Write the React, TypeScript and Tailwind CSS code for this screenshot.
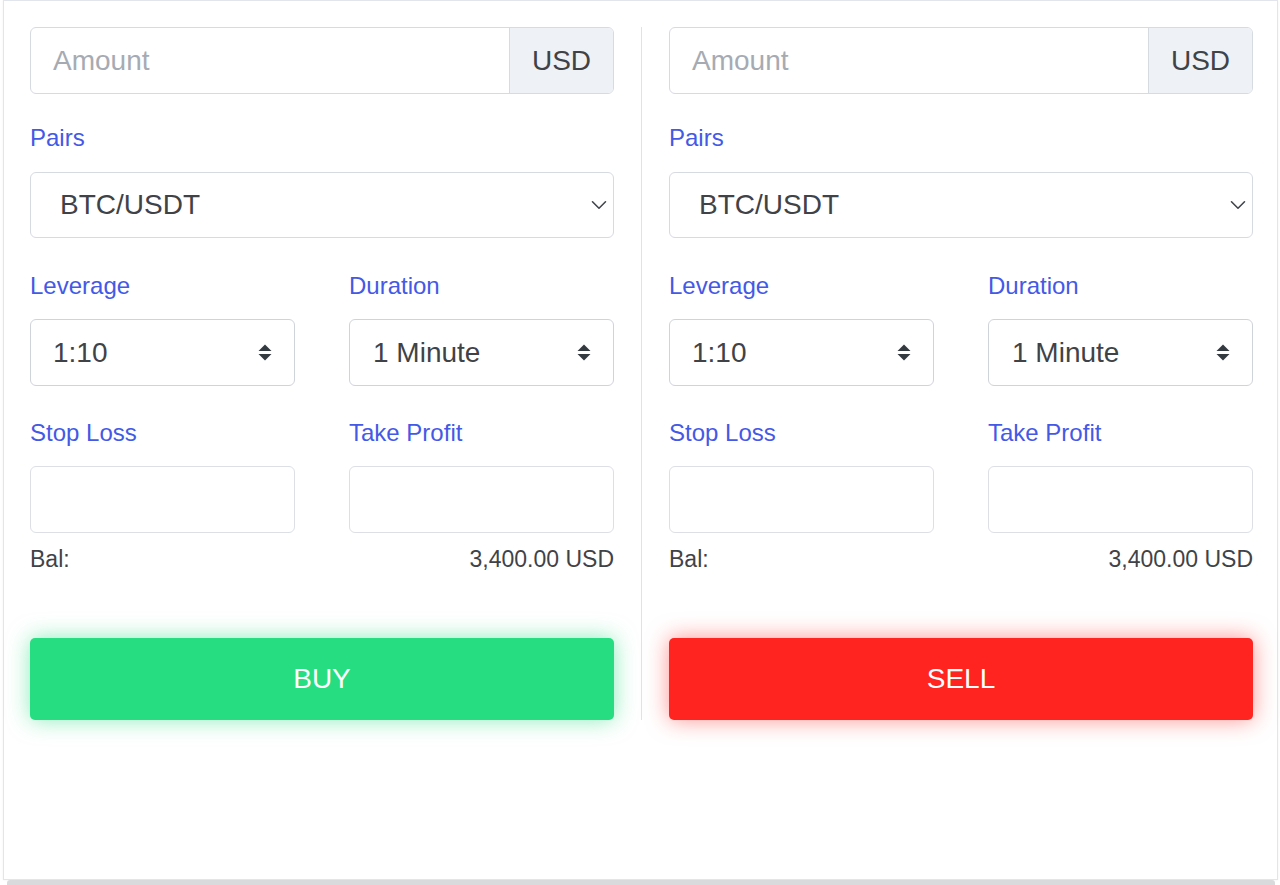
import React from "react";

const font = { fontFamily: '"Liberation Sans", Arial, Helvetica, sans-serif' };

function UpDown() {
  return (
    <svg width="14" height="17" viewBox="0 0 14 17" className="shrink-0">
      <polygon points="0.5,7 7,0.5 13.5,7" fill="#333a40" />
      <polygon points="0.5,10 13.5,10 7,16.5" fill="#333a40" />
    </svg>
  );
}

function Chevron() {
  return (
    <svg width="16" height="10" viewBox="0 0 16 10" className="shrink-0">
      <path d="M1.5 1.8 L8 8.2 L14.5 1.8" fill="none" stroke="#40454a" strokeWidth="1.6" strokeLinecap="round" strokeLinejoin="round" />
    </svg>
  );
}

function Label({ children }: { children: React.ReactNode }) {
  return <div className="text-[24px] leading-[28px] text-[#4459e6]">{children}</div>;
}

function Panel({ kind }: { kind: "buy" | "sell" }) {
  return (
    <div className="w-[584px] flex flex-col">
      <div className="flex h-[67px] border border-[#d6dae1] rounded-[6px] overflow-hidden">
        <div className="flex-1 flex items-center pl-[22px] text-[28px] text-[#a6abb3]">Amount</div>
        <div className="w-[104px] flex items-center justify-center border-l border-[#d6dae1] bg-[#eef1f6] text-[28px] text-[#3f4347]">
          USD
        </div>
      </div>

      <div className="mt-[30px]">
        <Label>Pairs</Label>
      </div>
      <div className="mt-[20px] flex items-center justify-between h-[66px] border border-[#d6dae1] rounded-[6px] pl-[29px] pr-[6px]">
        <span className="text-[28px] text-[#3f4347]">BTC/USDT</span>
        <Chevron />
      </div>

      <div className="mt-[34px] grid grid-cols-2 gap-x-[54px]">
        <Label>Leverage</Label>
        <Label>Duration</Label>
      </div>
      <div className="mt-[19px] grid grid-cols-2 gap-x-[54px]">
        <div className="flex items-center justify-between h-[67px] border border-[#cfd3da] rounded-[6px] pl-[22px] pr-[22px]">
          <span className="text-[28px] text-[#3f4347]">1:10</span>
          <UpDown />
        </div>
        <div className="flex items-center justify-between h-[67px] border border-[#cfd3da] rounded-[6px] pl-[23px] pr-[22px]">
          <span className="text-[28px] text-[#3f4347]">1 Minute</span>
          <UpDown />
        </div>
      </div>

      <div className="mt-[33px] grid grid-cols-2 gap-x-[54px]">
        <Label>Stop Loss</Label>
        <Label>Take Profit</Label>
      </div>
      <div className="mt-[19px] grid grid-cols-2 gap-x-[54px]">
        <div className="h-[67px] border border-[#dcdfe5] rounded-[6px]" />
        <div className="h-[67px] border border-[#dcdfe5] rounded-[6px]" />
      </div>

      <div className="mt-[12px] flex justify-between text-[23px] leading-[28px] text-[#3f4347]">
        <span>Bal:</span>
        <span>3,400.00 USD</span>
      </div>

      {kind === "buy" ? (
        <div className="mt-[65px] h-[82px] rounded-[5px] bg-[#26de81] shadow-[0_0_22px_rgba(38,222,129,0.55)] flex items-center justify-center text-white text-[28px]">
          BUY
        </div>
      ) : (
        <div className="mt-[65px] h-[82px] rounded-[5px] bg-[#ff2420] shadow-[0_0_22px_rgba(255,36,32,0.5)] flex items-center justify-center text-white text-[28px]">
          SELL
        </div>
      )}
    </div>
  );
}

export default function App() {
  return (
    <div className="w-[1280px] h-[885px] bg-white overflow-hidden" style={font}>
      <div className="ml-[3px] w-[1275px] h-[880px] border border-[#e2e5eb] shadow-[0_0_2px_rgba(0,0,0,0.06)] bg-white pt-[26px] pl-[26px]">
        <div className="flex">
          <Panel kind="buy" />
          <div className="ml-[27px] mr-[27px] w-px bg-[#dfe2e7]" />
          <Panel kind="sell" />
        </div>
      </div>
      <div className="ml-[7px] w-[1268px] h-[5px] rounded-t-[3px] bg-[#d9dadc]" />
    </div>
  );
}
